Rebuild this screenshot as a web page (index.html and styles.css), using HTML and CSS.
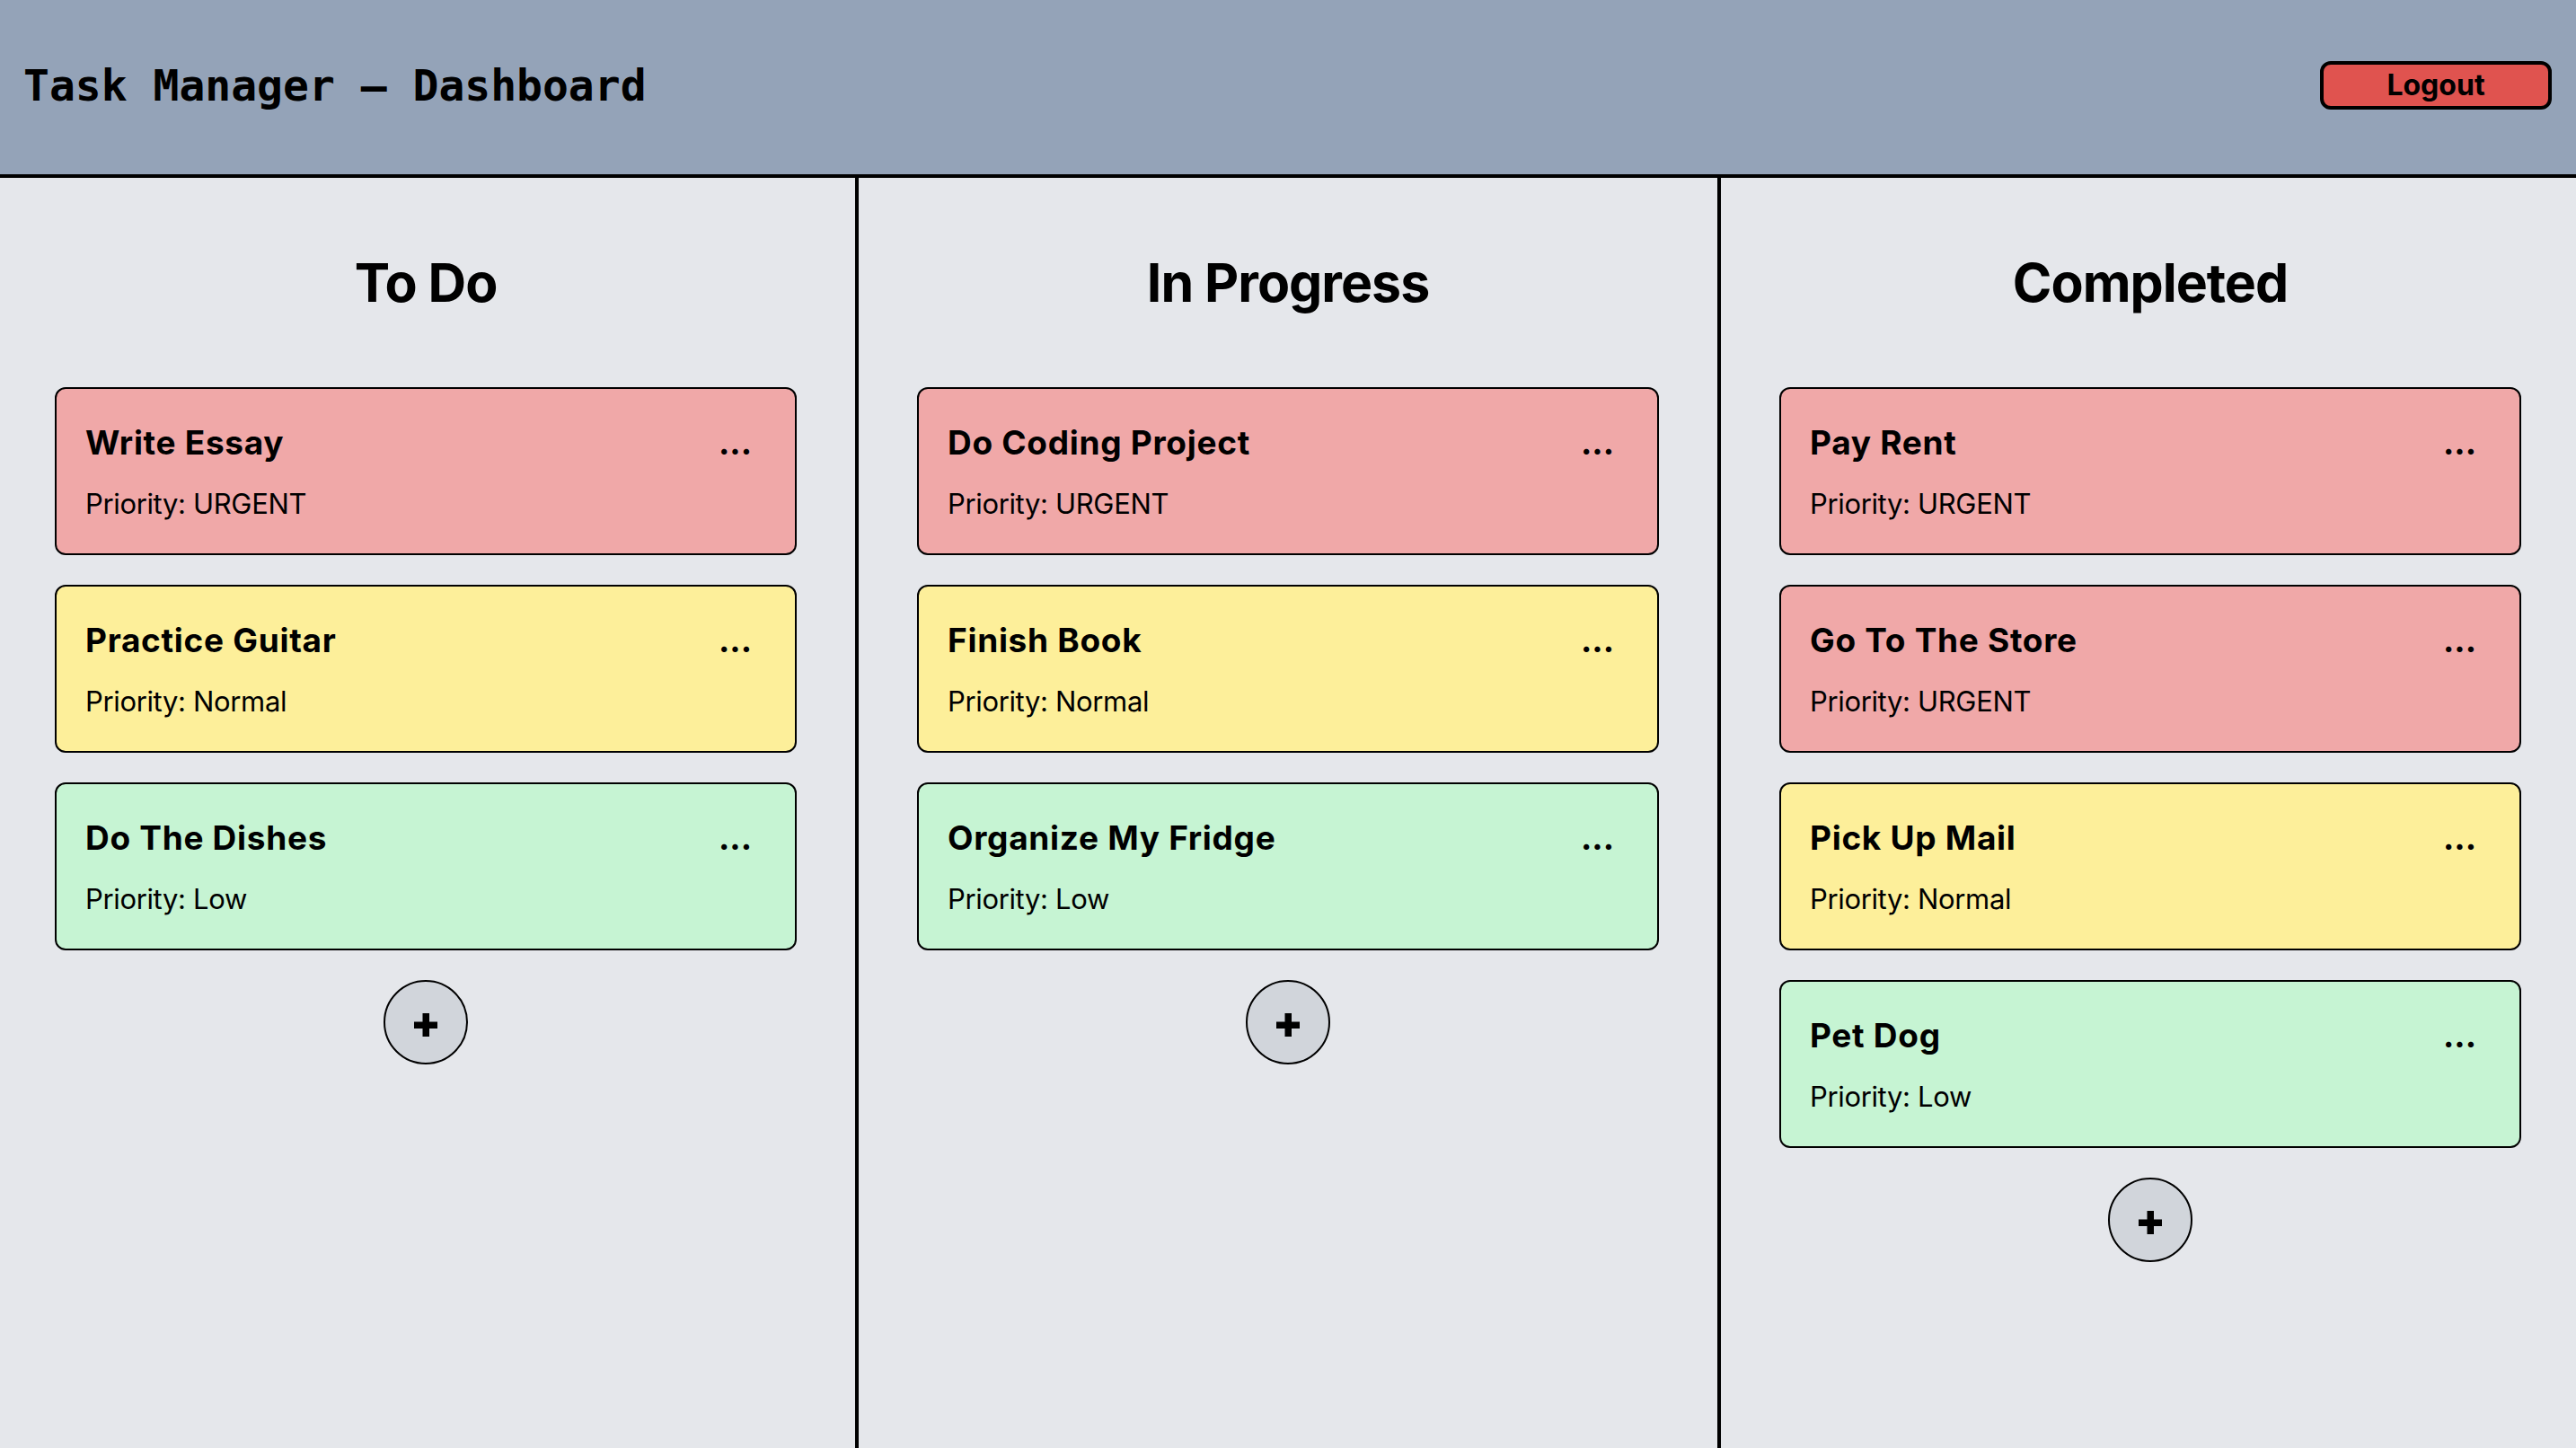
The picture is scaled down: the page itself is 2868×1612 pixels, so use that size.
FILE: index.html
```html
<!DOCTYPE html>
<html lang="en">
<head>
<meta charset="utf-8">
<title>Task Manager - Dashboard</title>
<link rel="stylesheet" href="styles.css">
</head>
<body>
<header class="topbar">
  <h1 class="app-title">Task Manager – Dashboard</h1>
  <button class="logout-btn" type="button">Logout</button>
</header>
<main class="board">
  <section class="column">
    <h2 class="column-title">To Do</h2>
    <div class="card-list">
      <article class="card card-urgent">
        <div class="card-top"><h3 class="card-title">Write Essay</h3><span class="card-menu">...</span></div>
        <p class="card-priority">Priority: URGENT</p>
      </article>
      <article class="card card-normal">
        <div class="card-top"><h3 class="card-title">Practice Guitar</h3><span class="card-menu">...</span></div>
        <p class="card-priority">Priority: Normal</p>
      </article>
      <article class="card card-low">
        <div class="card-top"><h3 class="card-title">Do The Dishes</h3><span class="card-menu">...</span></div>
        <p class="card-priority">Priority: Low</p>
      </article>
    </div>
    <button class="add-btn" type="button" aria-label="Add task"><svg class="plus-icon" viewBox="0 0 26 26" width="26" height="26"><rect x="9.5" y="0" width="7.5" height="26"/><rect x="0" y="9.5" width="26" height="7.5"/></svg></button>
  </section>
  <div class="divider"></div>
  <section class="column">
    <h2 class="column-title">In Progress</h2>
    <div class="card-list">
      <article class="card card-urgent">
        <div class="card-top"><h3 class="card-title">Do Coding Project</h3><span class="card-menu">...</span></div>
        <p class="card-priority">Priority: URGENT</p>
      </article>
      <article class="card card-normal">
        <div class="card-top"><h3 class="card-title">Finish Book</h3><span class="card-menu">...</span></div>
        <p class="card-priority">Priority: Normal</p>
      </article>
      <article class="card card-low">
        <div class="card-top"><h3 class="card-title">Organize My Fridge</h3><span class="card-menu">...</span></div>
        <p class="card-priority">Priority: Low</p>
      </article>
    </div>
    <button class="add-btn" type="button" aria-label="Add task"><svg class="plus-icon" viewBox="0 0 26 26" width="26" height="26"><rect x="9.5" y="0" width="7.5" height="26"/><rect x="0" y="9.5" width="26" height="7.5"/></svg></button>
  </section>
  <div class="divider"></div>
  <section class="column">
    <h2 class="column-title">Completed</h2>
    <div class="card-list">
      <article class="card card-urgent">
        <div class="card-top"><h3 class="card-title">Pay Rent</h3><span class="card-menu">...</span></div>
        <p class="card-priority">Priority: URGENT</p>
      </article>
      <article class="card card-urgent">
        <div class="card-top"><h3 class="card-title">Go To The Store</h3><span class="card-menu">...</span></div>
        <p class="card-priority">Priority: URGENT</p>
      </article>
      <article class="card card-normal">
        <div class="card-top"><h3 class="card-title">Pick Up Mail</h3><span class="card-menu">...</span></div>
        <p class="card-priority">Priority: Normal</p>
      </article>
      <article class="card card-low">
        <div class="card-top"><h3 class="card-title">Pet Dog</h3><span class="card-menu">...</span></div>
        <p class="card-priority">Priority: Low</p>
      </article>
    </div>
    <button class="add-btn" type="button" aria-label="Add task"><svg class="plus-icon" viewBox="0 0 26 26" width="26" height="26"><rect x="9.5" y="0" width="7.5" height="26"/><rect x="0" y="9.5" width="26" height="7.5"/></svg></button>
  </section>
</main>
</body>
</html>
```
FILE: styles.css
```css
* {
  box-sizing: border-box;
}

html, body {
  margin: 0;
  padding: 0;
}

body {
  background: #e5e7eb;
  font-family: Inter, "Noto Sans", "Liberation Sans", sans-serif;
  color: #000;
  min-height: 100vh;
  display: flex;
  flex-direction: column;
}

.topbar {
  height: 198px;
  flex: 0 0 auto;
  background: #94a3b8;
  border-bottom: 4px solid #000;
  display: flex;
  align-items: center;
  justify-content: space-between;
  padding: 0 27px 4px 26px;
}

.app-title {
  margin: 0;
  font-family: "DejaVu Sans Mono", "Liberation Mono", monospace;
  font-weight: 700;
  font-size: 48px;
  line-height: 48px;
}

.logout-btn {
  width: 258px;
  height: 54px;
  background: #e0534f;
  border: 4px solid #000;
  border-radius: 12px;
  font-family: Inter, "Noto Sans", sans-serif;
  font-weight: 700;
  font-size: 32px;
  line-height: 1;
  color: #000;
  padding: 0;
  display: flex;
  align-items: center;
  justify-content: center;
}

.board {
  flex: 1 1 auto;
  display: flex;
  align-items: stretch;
}

.column {
  flex: 1 1 0;
  min-width: 0;
  display: flex;
  flex-direction: column;
  padding: 81px 61px 40px;
}

.divider {
  flex: 0 0 4px;
  width: 4px;
  background: #000;
  margin: 0 4px;
}

.column-title {
  margin: 0 0 81px;
  text-align: center;
  font-weight: 700;
  font-size: 59px;
  line-height: 71px;
  letter-spacing: -1px;
}

.card-list {
  display: flex;
  flex-direction: column;
  gap: 33px;
}

.card {
  border: 2px solid #000;
  border-radius: 12px;
  padding: 37px 32px 36px;
}

.card-urgent {
  background: #f0a8a8;
}

.card-normal {
  background: #fdef9a;
}

.card-low {
  background: #c6f4d3;
}

.card-top {
  display: flex;
  align-items: baseline;
  justify-content: space-between;
}

.card-title {
  margin: 0;
  font-size: 37px;
  line-height: 45px;
  font-weight: 700;
  letter-spacing: 0.7px;
}

.card-menu {
  font-size: 37px;
  line-height: 45px;
  font-weight: 700;
  margin-right: 16px;
}

.card-priority {
  margin: 27px 0 0;
  font-size: 31px;
  line-height: 38px;
  font-weight: 400;
  letter-spacing: -0.35px;
}

.add-btn {
  align-self: center;
  margin-top: 33px;
  width: 94px;
  height: 94px;
  border-radius: 50%;
  border: 2px solid #000;
  background: #d1d5db;
  padding: 0;
  display: flex;
  align-items: center;
  justify-content: center;
}

.plus-icon {
  display: block;
  fill: #000;
  margin-top: 6px;
}
```
